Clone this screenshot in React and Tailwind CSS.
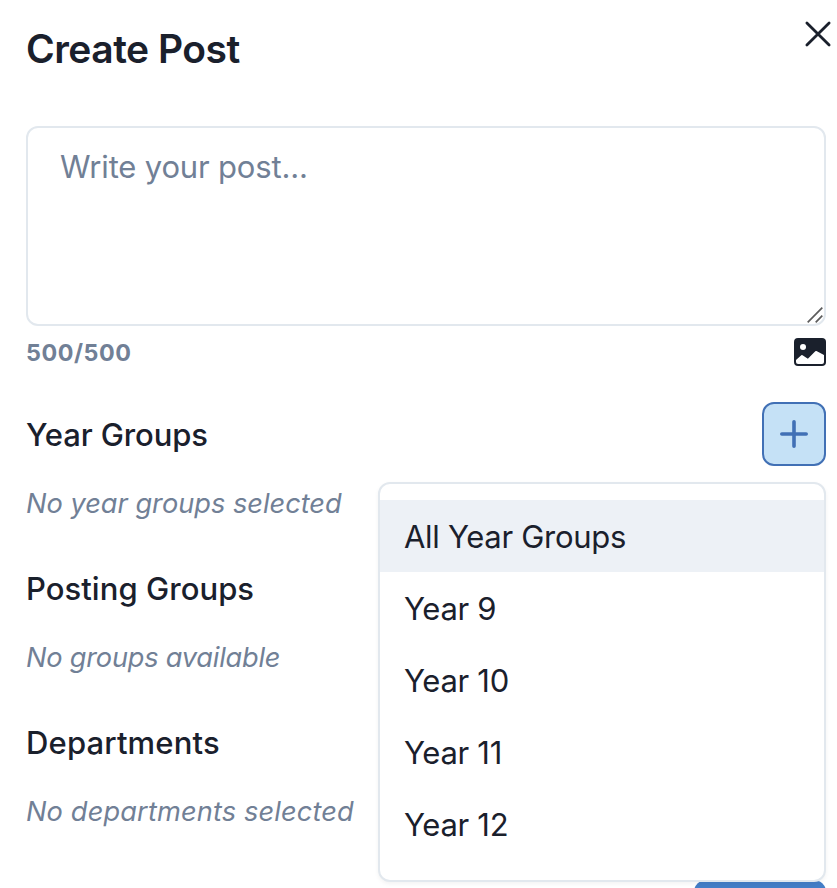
import { BsFillImageFill } from "react-icons/bs";

const YEAR_OPTIONS = ["All Year Groups", "Year 9", "Year 10", "Year 11", "Year 12"];

function Heading({ children, className = "" }) {
  return (
    <h2 className={`h-16 text-[31px] leading-[65px] font-medium whitespace-nowrap ${className}`}>
      {children}
    </h2>
  );
}

function EmptyNote({ children, className = "" }) {
  return (
    <p className={`mt-4 h-[42px] text-[27.2px] leading-[44px] italic whitespace-nowrap text-[#718096] ${className}`}>
      {children}
    </p>
  );
}

function YearMenu() {
  return (
    <ul className="absolute top-20 right-0 z-10 h-[400px] w-[448px] rounded-xl border-2 border-[#e2e8ee] bg-white py-4 shadow-[0_2px_4px_0_rgba(0,0,0,0.05)]">
      {YEAR_OPTIONS.map((label, i) => (
        <li
          key={label}
          className={`h-18 pl-6 text-[31px] leading-[74px] tracking-[-0.3px] ${i === 0 ? "bg-[#edf1f6]" : ""}`}
        >
          {label}
        </li>
      ))}
    </ul>
  );
}

export default function App() {
  return (
    <main className="flex h-[888px] flex-col overflow-hidden bg-white pr-[11px] pl-[26px] font-['Inter',sans-serif] text-[#1a202c]">
      <header className="flex h-[126px] shrink-0 justify-between">
        <h1 className="pt-[22px] text-[39px] leading-[54px] font-semibold tracking-[-0.5px] whitespace-nowrap">
          Create Post
        </h1>
        <button className="mt-[22px] -mr-1 h-6 w-6" aria-label="Close">
          <svg viewBox="0 0 24 24" className="h-6 w-6 overflow-visible" stroke="currentColor" strokeWidth="2.8" strokeLinecap="round">
            <path d="M.9.9l22.2 22.2M23.1.9L.9 23.1" />
          </svg>
        </button>
      </header>

      <div className="flex h-[200px] shrink-0 items-end justify-between rounded-xl border-2 border-[#e2e8ee]">
        <p className="h-full pt-[15px] pl-8 text-[31px] leading-[48px] tracking-[-0.17px] text-[#718096]">
          Write your post...
        </p>
        <svg viewBox="0 0 18 18" className="h-[18px] w-[18px]" stroke="#5c5c5c" strokeWidth="1.7">
          <path d="M1.7 16.3L16.3 1.7M9.7 16.3L16.3 9.7" />
        </svg>
      </div>

      <div className="flex h-[76px] shrink-0 items-start justify-between">
        <span className="pt-[9px] text-[23.3px] leading-9 font-bold tracking-[0.55px] text-[#718096]">500/500</span>
        <BsFillImageFill className="mt-[10px] h-8 w-8" />
      </div>

      <section className="relative h-[154px] shrink-0">
        <div className="flex justify-between">
          <Heading className="tracking-[-0.1px]">Year Groups</Heading>
          <button
            className="flex h-16 w-16 items-center justify-center rounded-xl border-2 border-[#4170b5] bg-[#c5e1f6] text-[#4170b5]"
            aria-label="Add year group"
          >
            <svg viewBox="0 0 28 28" className="h-7 w-7" stroke="currentColor" strokeWidth="3.6" strokeLinecap="round">
              <path d="M14 1.8v24.4M1.8 14h24.4" />
            </svg>
          </button>
        </div>
        <EmptyNote>No year groups selected</EmptyNote>
        <YearMenu />
      </section>

      <section className="h-[154px] shrink-0">
        <Heading className="tracking-[0.05px]">Posting Groups</Heading>
        <EmptyNote className="tracking-[-0.22px]">No groups available</EmptyNote>
      </section>

      <section className="h-[154px] shrink-0">
        <Heading className="tracking-[0.15px]">Departments</Heading>
        <EmptyNote className="tracking-[0.14px]">No departments selected</EmptyNote>
      </section>

      <footer className="flex shrink-0 justify-end pt-4">
        <button className="h-20 w-[132px] rounded-xl bg-[#447ec7]" aria-label="Submit post" />
      </footer>
    </main>
  );
}
